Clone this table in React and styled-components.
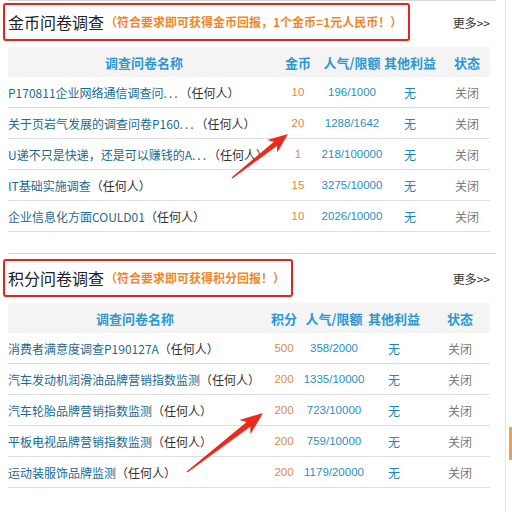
import React from "react";
import styled, { createGlobalStyle } from "styled-components";

const Global = createGlobalStyle`
  html, body { margin: 0; padding: 0; background: #fff; }
  body { font-family: "Noto Sans CJK SC", "Liberation Sans", sans-serif; }
`;

const Page = styled.div`
  position: relative;
  display: flex;
  width: 512px;
  height: 512px;
  overflow: hidden;
  background: #fff;
`;

const Main = styled.div`
  width: 506px;
  box-sizing: border-box;
  padding-left: 8px;
  border-right: 1px solid #e4e4e4;
`;

const Side = styled.div`
  flex: 1;
  padding-top: 427px;
  padding-left: 3px;
`;

const SideMark = styled.div`
  width: 3px;
  height: 33px;
  background: #e9a05c;
`;

const Section = styled.section`
  width: 488px;
  border-top: 1px solid #d6d6d6;
  padding-top: ${(p) => p.$pt}px;
  padding-bottom: 21px;
`;

const TitleRow = styled.div`
  display: flex;
  align-items: center;
  justify-content: space-between;
  width: 482px;
`;

const TitleBox = styled.div`
  display: inline-flex;
  align-items: center;
  height: 38px;
  box-sizing: border-box;
  margin-left: -5px;
  padding: 0 6px 0 3px;
  border: 2px solid #e3261d;
  border-radius: 3px;
`;

const Title = styled.span`
  font-size: 16px;
  line-height: 1;
  color: #222;
`;

const Subtitle = styled.span`
  font-size: 12px;
  font-weight: bold;
  line-height: 1;
  color: #f0862a;
  margin-left: 1px;
`;

const More = styled.a`
  font-size: 12px;
  color: #333;
  text-decoration: none;
  white-space: nowrap;
`;

const Table = styled.div`
  margin-top: 6px;
  width: 482px;
`;

const HeadRow = styled.div`
  display: grid;
  grid-template-columns: ${(p) => p.$cols};
  height: 30px;
  align-items: center;
  background: #f4f4f4;
`;

const HeadCell = styled.div`
  display: flex;
  justify-content: center;
  font-size: 13px;
  font-weight: bold;
  color: #2b98d2;
  white-space: nowrap;
  padding-left: ${(p) => p.$pad || 0}px;
`;

const Row = styled.div`
  display: grid;
  grid-template-columns: ${(p) => p.$cols};
  height: 30px;
  align-items: center;
  border-bottom: 1px solid #dedede;
`;

const NameCell = styled.div`
  font-size: 12px;
  color: #1d6a92;
  white-space: nowrap;
`;

const Dots = styled.span`
  letter-spacing: 2px;
`;

const Who = styled.span`
  color: #333;
`;

const Cell = styled.div`
  display: flex;
  justify-content: center;
  white-space: nowrap;
  padding-left: ${(p) => p.$pad || 0}px;
  font-size: ${(p) => (p.$num ? "11.5px" : "12px")};
  font-family: ${(p) =>
    p.$num ? '"Liberation Sans", "Noto Sans CJK SC", sans-serif' : '"Noto Sans CJK SC", sans-serif'};
  color: ${(p) => p.$color};
`;

const Overlay = styled.svg`
  position: absolute;
  left: 0;
  top: 0;
  pointer-events: none;
`;

function arrowPoints(tx, ty, px, py, headLen, headHalf, shaftHalf) {
  const dx = px - tx;
  const dy = py - ty;
  const len = Math.hypot(dx, dy);
  const ux = dx / len;
  const uy = dy / len;
  const nx = -uy;
  const ny = ux;
  const bx = px - ux * headLen;
  const by = py - uy * headLen;
  const sx = px - ux * headLen * 0.8;
  const sy = py - uy * headLen * 0.8;
  const pts = [
    [tx - nx * 0.6, ty - ny * 0.6],
    [sx - nx * shaftHalf, sy - ny * shaftHalf],
    [bx - nx * headHalf, by - ny * headHalf],
    [px, py],
    [bx + nx * headHalf, by + ny * headHalf],
    [sx + nx * shaftHalf, sy + ny * shaftHalf],
    [tx + nx * 0.6, ty + ny * 0.6],
  ];
  return pts.map((p) => p.map((v) => v.toFixed(1)).join(",")).join(" ");
}

const coinRows = [
  { name: "P170811企业网络通信调查问", dots: true, v: "10", pop: "196/1000" },
  { name: "关于页岩气发展的调查问卷P160", dots: true, v: "20", pop: "1288/1642" },
  { name: "U递不只是快递，还是可以赚钱的A", dots: true, v: "1", pop: "218/100000" },
  { name: "IT基础实施调查", v: "15", pop: "3275/10000" },
  { name: "企业信息化方面COULD01", v: "10", pop: "2026/10000" },
];

const pointRows = [
  { name: "消费者满意度调查P190127A", v: "500", pop: "358/2000" },
  { name: "汽车发动机润滑油品牌营销指数监测", v: "200", pop: "1335/10000" },
  { name: "汽车轮胎品牌营销指数监测", v: "200", pop: "723/10000" },
  { name: "平板电视品牌营销指数监测", v: "200", pop: "759/10000" },
  { name: "运动装服饰品牌监测", v: "200", pop: "1179/20000" },
];

function SurveyTable({ cols, pad, unit, rows }) {
  return (
    <Table>
      <HeadRow $cols={cols}>
        <HeadCell>调查问卷名称</HeadCell>
        <HeadCell>{unit}</HeadCell>
        <HeadCell>人气/限额</HeadCell>
        <HeadCell>其他利益</HeadCell>
        <HeadCell $pad={pad}>状态</HeadCell>
      </HeadRow>
      {rows.map((r) => (
        <Row key={r.name} $cols={cols}>
          <NameCell>
            {r.name}
            {r.dots && <Dots>...</Dots>}
            <Who>（任何人）</Who>
          </NameCell>
          <Cell $num $color="#de8a3e">{r.v}</Cell>
          <Cell $num $color="#2a8fc2">{r.pop}</Cell>
          <Cell $color="#1f84bd">无</Cell>
          <Cell $pad={pad} $color="#777">关闭</Cell>
        </Row>
      ))}
    </Table>
  );
}

export default function App() {
  return (
    <Page>
      <Global />
      <Main>
        <Section $pt={2}>
          <TitleRow>
            <TitleBox>
              <Title>金币问卷调查</Title>
              <Subtitle>（符合要求即可获得金币回报，1个金币=1元人民币！）</Subtitle>
            </TitleBox>
            <More href="#">更多&gt;&gt;</More>
          </TitleRow>
          <SurveyTable
            cols="272px 36px 72px 44px 58px"
            pad={12}
            unit="金币"
            rows={coinRows}
          />
        </Section>
        <Section $pt={5}>
          <TitleRow>
            <TitleBox>
              <Title>积分问卷调查</Title>
              <Subtitle>（符合要求即可获得积分回报！）</Subtitle>
            </TitleBox>
            <More href="#">更多&gt;&gt;</More>
          </TitleRow>
          <SurveyTable
            cols="254px 44px 56px 64px 64px"
            pad={4}
            unit="积分"
            rows={pointRows}
          />
        </Section>
      </Main>
      <Side>
        <SideMark />
      </Side>
      <Overlay width="512" height="512" viewBox="0 0 512 512">
        <polygon points={arrowPoints(232, 178, 288, 134, 20, 8, 2.6)} fill="#ec2a1c" />
        <polygon points={arrowPoints(187, 472, 263, 413, 23, 9, 3)} fill="#ec2a1c" />
      </Overlay>
    </Page>
  );
}
